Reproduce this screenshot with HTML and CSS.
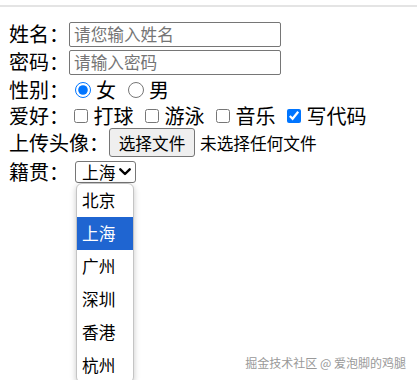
FILE: index.html
```html
<!DOCTYPE html>
<html lang="zh-CN">
<head>
<meta charset="utf-8">
<title>表单</title>
<link rel="stylesheet" href="styles.css">
</head>
<body>
<div class="topbar"></div>
<form class="form">
  <div class="row r1"><span class="label">姓名：</span><input class="text" type="text" placeholder="请您输入姓名"></div>
  <div class="row r2"><span class="label">密码：</span><input class="text" type="password" placeholder="请输入密码"></div>
  <div class="row r3"><span class="label">性别：</span><label class="opt"><input class="radio first" type="radio" name="sex" checked>女</label><label class="opt"><input class="radio" type="radio" name="sex">男</label></div>
  <div class="row r4"><span class="label">爱好：</span><label class="opt"><input class="check first" type="checkbox">打球</label><label class="opt"><input class="check" type="checkbox">游泳</label><label class="opt"><input class="check" type="checkbox">音乐</label><label class="opt"><input class="check" type="checkbox" checked>写代码</label></div>
  <div class="row r5"><span class="label">上传头像：</span><button type="button" class="file-btn">选择文件</button><span class="file-note">未选择任何文件</span></div>
  <div class="row r6"><span class="label">籍贯：</span>
    <div class="select-wrap">
      <div class="select"><span class="select-value">上海</span><svg class="chev" width="12" height="8" viewBox="0 0 12 8"><path d="M1.3 1.3 L6 6 L10.7 1.3" fill="none" stroke="#000" stroke-width="2.4" stroke-linecap="round" stroke-linejoin="round"/></svg></div>
      <ul class="dropdown">
        <li class="item">北京</li>
        <li class="item active">上海</li>
        <li class="item">广州</li>
        <li class="item">深圳</li>
        <li class="item">香港</li>
        <li class="item">杭州</li>
      </ul>
    </div>
  </div>
</form>
<div class="watermark">掘金技术社区 @ 爱泡脚的鸡腿</div>
</body>
</html>
```
FILE: styles.css
```css
html {
  overflow: hidden;
}
body {
  margin: 0;
  height: 380px;
  position: relative;
  font-family: "Noto Sans CJK SC", "Microsoft YaHei", sans-serif;
  font-size: 20px;
  color: #000;
  background: #fff;
}
.topbar {
  margin-top: 5px;
  height: 2px;
  background: #e4e4e4;
}
.form {
  padding: 13px 0 0 9px;
}
.row {
  display: flex;
  align-items: center;
  height: 28px;
  white-space: nowrap;
}
.r3 { height: 27px; }
.r4 { height: 25px; }
.r5 { height: 29px; }
.r6 { height: 30px; }
.label {
  line-height: 1;
}
.opt {
  display: flex;
  align-items: center;
  line-height: 1;
}
.text {
  box-sizing: border-box;
  width: 212px;
  height: 25px;
  margin: 0;
  padding: 0 4px;
  border: 1px solid #767676;
  border-radius: 2px;
  font-family: inherit;
  font-size: 16.67px;
  outline: none;
}
.text::placeholder {
  color: #757575;
}
.radio {
  width: 16px;
  height: 16px;
  margin: 0 5px 0 12px;
}
.radio.first {
  margin-left: 6px;
}
.check {
  width: 14px;
  height: 14px;
  margin: 0 5.5px 0 11.5px;
}
.check.first {
  margin-left: 5px;
}
.file-btn {
  box-sizing: border-box;
  width: 86px;
  height: 29px;
  margin: 0 5px 0 0;
  padding: 0;
  border: 1px solid #767676;
  border-radius: 3px;
  background: #efefef;
  color: #000;
  font-family: inherit;
  font-size: 16.67px;
}
.file-note {
  font-size: 16.67px;
}
.select-wrap {
  position: relative;
  margin-left: 6px;
}
.select {
  box-sizing: border-box;
  display: flex;
  align-items: center;
  width: 61px;
  height: 22px;
  padding-left: 6px;
  border: 1px solid #767676;
  border-radius: 3px;
  font-size: 16.67px;
  line-height: 1;
}
.chev {
  margin-left: 3.5px;
}
.dropdown {
  position: absolute;
  top: 22px;
  left: 1px;
  width: 58px;
  box-sizing: border-box;
  margin: 0;
  padding: 0;
  list-style: none;
  background: #fff;
  border: 1px solid #c4c4c4;
  border-radius: 6px;
  box-shadow: 0 2px 6px rgba(0, 0, 0, 0.22);
  overflow: hidden;
}
.item {
  height: 33px;
  line-height: 33px;
  padding-left: 5px;
  font-size: 16.67px;
}
.item.active {
  background: #1f65d1;
  color: #fff;
}
.watermark {
  position: absolute;
  right: 11px;
  top: 354px;
  font-size: 12px;
  line-height: 17px;
  color: #999;
}
```
